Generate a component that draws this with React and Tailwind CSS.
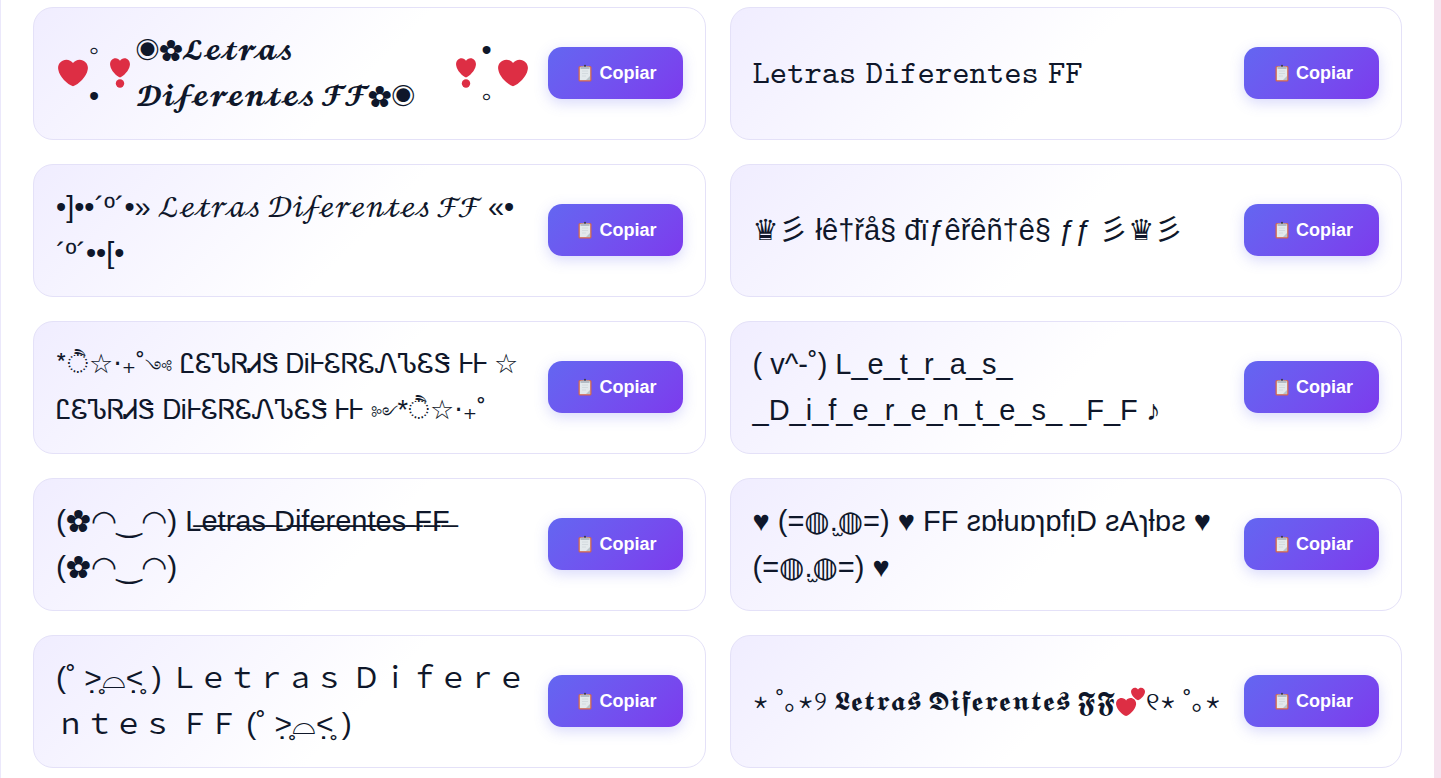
const HEART =
  "M35.885 11.833c0-5.45-4.418-9.868-9.867-9.868-3.308 0-6.227 1.633-8.018 4.129-1.791-2.496-4.71-4.129-8.017-4.129-5.45 0-9.868 4.417-9.868 9.868 0 .772.098 1.52.266 2.241C1.751 22.587 11.216 31.568 18 34.034c6.783-2.466 16.249-11.447 17.617-19.959.17-.721.268-1.469.268-2.242z";

function Heart() {
  return (
    <svg viewBox="0 0 36 36" className="size-[30px] shrink-0" aria-hidden="true">
      <path fill="#DD2E44" d={HEART} />
    </svg>
  );
}

function HeartMark() {
  return (
    <svg viewBox="0 0 20 30" className="h-[30px] w-5 shrink-0" aria-hidden="true">
      <path fill="#DD2E44" transform="translate(0 -1) scale(.556 .6)" d={HEART} />
      <circle cx="10" cy="25.5" r="4.2" fill="#DD2E44" />
    </svg>
  );
}

function TwoHearts() {
  return (
    <svg viewBox="0 0 30 30" className="inline-block size-[30px] align-[-7px]" aria-hidden="true">
      <path fill="#DD2E44" transform="translate(0 10) scale(.56)" d={HEART} />
      <path fill="#DD2E44" transform="translate(15 0) scale(.39)" d={HEART} />
    </svg>
  );
}

function Clipboard() {
  return (
    <svg viewBox="0 0 16 18" className="h-[18px] w-4 shrink-0" aria-hidden="true">
      <rect x="1.5" y="2" width="13" height="15.5" rx="1.5" fill="#d0644e" />
      <rect x="2.8" y="3.2" width="10.4" height="13" fill="#e3e9ec" />
      <path d="M9 16l4-4v4z" fill="#b9c4c9" />
      <path d="M5 7h6M5 9.5h6M5 12h4" stroke="#d3dade" strokeWidth="1" />
      <path d="M3.5 2.5h3a1.6 1.6 0 0 1 3 0h3V5h-9z" fill="#b4bcc4" />
      <circle cx="8" cy="1.8" r="1.1" fill="#3f3a4c" />
    </svg>
  );
}

function Dots({ top, bottom, className }) {
  return (
    <span className={`flex w-3 shrink-0 flex-col items-center ${className}`}>
      <span>{top}</span>
      <span>{bottom}</span>
    </span>
  );
}

const Script = ({ children }) => (
  <span className="font-['STIX_Two_Math','STIXGeneral','FreeSerif','Latin_Modern_Math','Noto_Sans_Math',serif] text-[30px] leading-none">
    {children}
  </span>
);
const Fraktur = ({ children }) => (
  <span className="font-['STIX_Two_Math','STIXGeneral','FreeSerif','Latin_Modern_Math','Noto_Sans_Math',serif] text-[27px] leading-none">
    {children}
  </span>
);
const Ornament = ({ children }) => <span className="text-[17px] leading-none">{children}</span>;
const Kaomoji = ({ children }) => <span className="text-[30px] leading-none">{children}</span>;
const Symbol = ({ children }) => (
  <span className="font-['FreeSerif','Noto_Sans_Symbols_2','Noto_Sans_Symbols2','Symbola',serif] leading-none">
    {children}
  </span>
);

const SAMPLES = [
  {
    id: "corazones",
    body: (
      <span className="flex items-center pl-0.5">
        <Heart />
        <Dots top="◦" bottom="•" className="mr-2.5" />
        <HeartMark />
        <span className="flex-1 pl-1.5">
          <Symbol>◉✿</Symbol>
          <Script>𝓛𝓮𝓽𝓻𝓪𝓼 𝓓𝓲𝓯𝓮𝓻𝓮𝓷𝓽𝓮𝓼 𝓕𝓕</Script>
          <Symbol>✿◉</Symbol>
        </span>
        <HeartMark />
        <Dots top="•" bottom="◦" className="mx-[5px]" />
        <Heart />
      </span>
    ),
  },
  {
    id: "maquina",
    body: (
      <span className="font-['FreeMono','Latin_Modern_Math','STIX_Two_Math','Noto_Sans_Math','DejaVu_Sans_Mono',monospace] text-[33px] leading-none">
        𝙻𝚎𝚝𝚛𝚊𝚜<span className="font-['Liberation_Sans']"> </span>𝙳𝚒𝚏𝚎𝚛𝚎𝚗𝚝𝚎𝚜
        <span className="font-['Liberation_Sans']"> </span>𝙵𝙵
      </span>
    ),
  },
  {
    id: "cursiva",
    body: (
      <>
        •]••´º´•» <Script>ℒℯ𝓉𝓇𝒶𝓈 𝒟𝒾𝒻ℯ𝓇ℯ𝓃𝓉ℯ𝓈 ℱℱ</Script> «•<wbr />
        <span className="whitespace-nowrap">´º´••[•</span>
      </>
    ),
  },
  { id: "corona", body: "♛彡 łê†řå§ đïƒêřêñ†ê§ ƒƒ 彡♛彡" },
  {
    id: "estrella",
    body: (
      <span className="block text-[27px]">
        *ੈ☆‧₊˚<Ornament>༺</Ornament>{" "}
        {"\u13DD\u13CB\u13D6\u13D2\u13D7\u13D5 \u13A0\u13A5\u13B0\u13CB\u13D2\u13CB\u13C1\u13D6\u13CB\u13D5 \u13B0\u13B0 ☆ \u13DD\u13CB\u13D6\u13D2\u13D7\u13D5 \u13A0\u13A5\u13B0\u13CB\u13D2\u13CB\u13C1\u13D6\u13CB\u13D5 \u13B0\u13B0 "}
        <Ornament>༻</Ornament>*ੈ☆‧₊˚
      </span>
    ),
  },
  { id: "nota", body: "( v^-˚) L_e_t_r_a_s_ _D_i_f_e_r_e_n_t_e_s_ _F_F ♪" },
  {
    id: "tachado",
    body: (
      <>
        <Kaomoji>
          (<Symbol>✿</Symbol>◠‿◠)
        </Kaomoji>{" "}
        L̶e̶t̶r̶a̶s̶ ̶D̶i̶f̶e̶r̶e̶n̶t̶e̶s̶ ̶F̶F̶{" "}
        <Kaomoji>
          (<Symbol>✿</Symbol>◠‿◠)
        </Kaomoji>
      </>
    ),
  },
  { id: "espejo", body: "♥ (=◍.̫◍=) ♥ FF ƨɒƚuɒɿɒfᴉD ƨAɿƚɒƨ ♥ (=◍.̫◍=) ♥" },
  {
    id: "ancho",
    body: (
      <>
        <Kaomoji>(˚ ˃̣̣̥⌓˂̣̣̥ )</Kaomoji> Ｌｅｔｒａｓ Ｄｉｆｅｒｅｎｔｅｓ ＦＦ <Kaomoji>(˚ ˃̣̣̥⌓˂̣̣̥ )</Kaomoji>
      </>
    ),
  },
  {
    id: "gotica",
    body: (
      <span className="block text-[26px]">
        ⋆ ˚｡⋆୨ <Fraktur>𝕷𝖊𝖙𝖗𝖆𝖘 𝕯𝖎𝖋𝖊𝖗𝖊𝖓𝖙𝖊𝖘 𝕱𝕱</Fraktur>
        <TwoHearts />
        ୧⋆ ˚｡⋆
      </span>
    ),
  },
];

function Card({ children }) {
  return (
    <li className="flex min-h-[133px] items-center gap-5 rounded-[20px] border border-[#e4e1f8] bg-linear-135 from-[#f0edff] via-white via-50% to-white px-[22px] pt-[18px] pb-5">
      <div className="min-w-0 flex-1 text-[29px] leading-[46px] text-[#0f172a]">{children}</div>
      <button
        type="button"
        className="flex h-[52px] w-[135px] shrink-0 items-center justify-center gap-1.5 rounded-[14px] bg-linear-135 from-[#6366f1] to-[#7c3aed] pl-1 text-lg font-bold text-white shadow-[0_4px_14px_rgba(99,102,241,0.25)]"
      >
        <Clipboard />
        Copiar
      </button>
    </li>
  );
}

export default function App() {
  return (
    <div className="min-h-screen bg-[#f5e2ee] pr-[7px] font-['Liberation_Sans','DejaVu_Math_TeX_Gyre','DejaVu_Sans','Noto_Sans','Noto_Sans_CJK_JP',sans-serif]">
      <main className="min-h-screen border-l border-[#ebe8fb] bg-white px-8 pt-[7px] pb-2">
        <ul className="grid grid-cols-2 gap-6">
          {SAMPLES.map((s) => (
            <Card key={s.id}>{s.body}</Card>
          ))}
        </ul>
      </main>
    </div>
  );
}
